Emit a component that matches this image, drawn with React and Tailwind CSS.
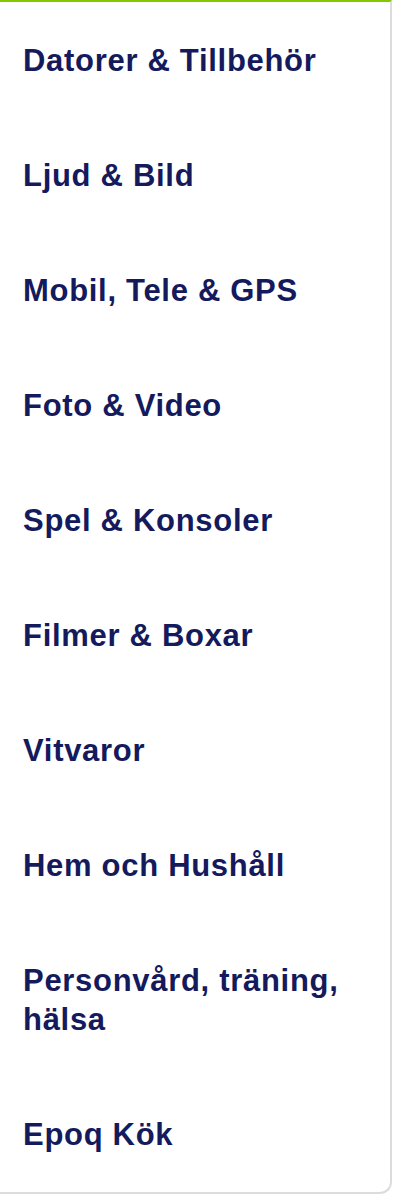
const categories = [
  'Datorer & Tillbehör',
  'Ljud & Bild',
  'Mobil, Tele & GPS',
  'Foto & Video',
  'Spel & Konsoler',
  'Filmer & Boxar',
  'Vitvaror',
  'Hem och Hushåll',
  'Personvård, träning, hälsa',
  'Epoq Kök',
]

export default function App() {
  return (
    <div className="min-h-[1202px] w-[402px] bg-white overflow-hidden font-['Liberation_Sans',Arial,sans-serif]">
      <nav className="-ml-[10px] w-[402px] bg-white border-t-2 border-t-[#84c800] border-r-2 border-b-2 border-l-2 border-r-[#dcdcdc] border-b-[#dcdcdc] border-l-[#dcdcdc] rounded-b-[12px] pt-px">
        <ul className="flex flex-col">
          {categories.map(name => (
            <li key={name} className="pl-[31px] pr-2 py-[38px]">
              <a href="#" className="block text-[31px] leading-[39px] font-bold tracking-[0.7px] text-[#141a5c]">
                {name}
              </a>
            </li>
          ))}
        </ul>
      </nav>
    </div>
  )
}
